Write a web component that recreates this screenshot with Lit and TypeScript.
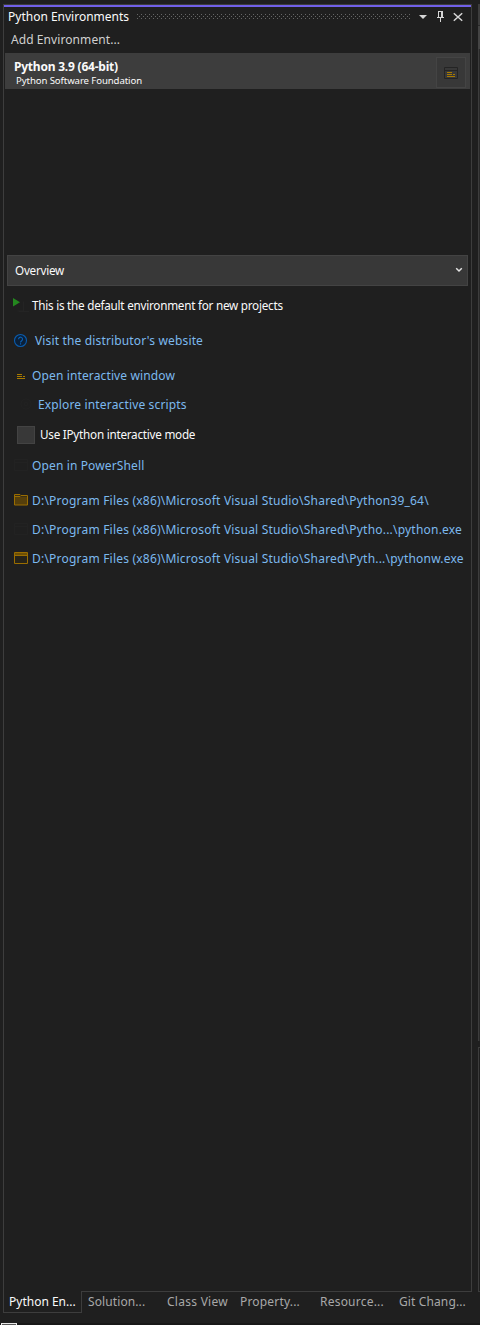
import { LitElement, html, css, svg, nothing } from "lit";
import { customElement } from "lit/decorators.js";

const playIcon = svg`<path d="M0 7v8.500l7-4.250z" fill="#24881f"/><path d="M10.500 10.500v9.500h-6M6 20.500h10" stroke="#242424" fill="none"/>`;
const helpIcon = svg`<circle cx="7.500" cy="14.500" r="6" fill="#0b2038" stroke="#0a5cae" stroke-width="1.100"/><path d="M5.600 13.200a1.950 1.950 0 1 1 3.100 1.500c-.8.55-1.150.85-1.150 1.800" fill="none" stroke="#0a62b8" stroke-width="1.100"/><path d="M7 17.300h1.100v1.100H7z" fill="#0a62b8"/>`;
const linesIcon = svg`<path shape-rendering="crispEdges" d="M0 0h5v1H0zM0 2h5v1H0zM6 2h2v1H6zM0 4h3v1H0zM3 4h5v1H3z" fill="#a87a00"/>`;
const folderIcon = svg`<path d="M1.500 9.500h5l1 1h7v8.500h-13z" fill="#553f0c"/><path d="M1.500 8.500h5.500l1 1h6.500v9.500h-13zM1.500 10.500h5.500l1-1" fill="none" stroke="#9a6d00"/>`;
const windowIcon = svg`<path d="M1.500 8.500h13v11h-13z" fill="#262319" stroke="#9a6d00"/><path d="M2 9h12v2H2z" fill="#6d4f05"/><path d="M2 11h12v1H2z" fill="#9a6d00"/>`;
const ghostWindow = svg`<path d="M1.500 8.500h13v11h-13zM2 11.500h12" fill="none" stroke="#222"/>`;
const ghostGear = svg`<circle cx="13" cy="14" r="5" fill="none" stroke="#222"/><circle cx="13" cy="14" r="2" fill="none" stroke="#222"/>`;

const icon = (content: unknown) =>
  html`<svg class="icon" width="20" height="29" viewBox="0 0 20 29">${content}</svg>`;

@customElement("app-root")
export class AppRoot extends LitElement {
  static styles = css`
    :host {
      display: block;
      height: 1325px;
      position: relative;
      overflow: hidden;
      background: #1f1f1f;
      color: #fafafa;
      font: 12px/16px "Noto Sans", sans-serif;
      white-space: nowrap;
    }
    * { box-sizing: border-box; }
    svg { display: block; flex: none; }
    .page { display: flex; height: 1325px; padding: 4px 0 0 3px; }
    .tool { width: 469px; display: flex; flex-direction: column; height: 1321px; }
    .panel {
      height: 1287px;
      border: 1px solid #3d3d3d;
      border-bottom: 0;
      display: flex;
      flex-direction: column;
      flex: none;
    }
    .accent { height: 2px; background: #7160e8; flex: none; }
    .title { height: 20px; display: flex; align-items: center; padding-left: 4px; flex: none; }
    .title .name { width: 129px; }
    .add { height: 26px; line-height: 26px; padding-left: 7px; color: #d0d0d0; letter-spacing: 0.08px; flex: none; }
    .env {
      height: 36px;
      margin: 0 1px;
      background: #3d3d3d;
      display: flex;
      justify-content: space-between;
      padding: 4px 4px 0 9px;
      flex: none;
    }
    .env-name { font-weight: 700; letter-spacing: -0.22px; line-height: 17px; padding-top: 1px; }
    .env-vendor { font-size: 9.6px; line-height: 12px; letter-spacing: -0.09px; padding-left: 2px; }
    .env-button { width: 30px; height: 31px; border: 1px solid #444; background: #383838; }
    .combo {
      margin: 166px 3px 0;
      height: 31px;
      background: #383838;
      border: 1px solid #434343;
      display: flex;
      align-items: center;
      justify-content: space-between;
      padding: 0 4px 2px 7px;
      flex: none;
    }
    .plain { font-size: 11.7px; letter-spacing: -0.24px; }
    .list { padding: 5px 0 0 9px; }
    .group { margin-bottom: 6px; }
    .row { height: 29px; display: flex; align-items: center; }
    .row .text { margin-left: -1px; }
    .row .plain { padding-bottom: 2px; }
    .link { color: #7cb9ee; letter-spacing: 0.13px; }
    .visit .text { margin-left: 2px; letter-spacing: 0.15px; }
    .explore .text { margin-left: 5px; letter-spacing: 0.15px; }
    .path .text { letter-spacing: 0.21px; }
    .check { margin: 1px 0 2px; padding-left: 4px; }
    .check .text { margin-left: 5px; }
    .box { width: 18px; height: 18px; background: #383838; border: 1px solid #434343; margin-top: 1px; }
    .tabs { display: flex; height: 22px; flex: none; color: #a8a8a8; letter-spacing: 0.1px; }
    .tab { border-top: 1px solid #3d3d3d; padding: 1px 0 0 6px; width: 79px; line-height: 17px; }
    .tab.active {
      border: 1px solid #3d3d3d;
      border-top: 0;
      padding: 2px 0 0 5px;
      color: #fafafa;
      letter-spacing: 0;
    }
    .tab.class-view { width: 73px; letter-spacing: 0.27px; }
    .tab.property { width: 80px; letter-spacing: 0.18px; }
    .tab.resource { letter-spacing: 0.22px; }
    .tab.git { flex: 1; letter-spacing: 0.12px; }
    .neighbor { margin-left: 6px; width: 2px; display: flex; flex-direction: column; }
    .n-head { height: 22px; background: #3d3d3d; border-bottom: 1px solid #2a2a2a; flex: none; }
    .n-row { height: 23px; background: #444; flex: none; }
    .n-body { height: 992px; border-left: 1px solid #3d3d3d; background: #2a2a2a; flex: none; }
    .n-next { height: 245px; margin-top: 6px; border: 1px solid #3d3d3d; border-right: 0; flex: none; }
    .status { position: absolute; left: 0; right: 0; bottom: 0; height: 2px; padding-left: 1px; background: #181818; }
    .status-icon { width: 16px; height: 2px; border: 1px solid #e8e8e8; border-bottom: 0; background: #555; }
  `;

  private row(kind: string, glyph: unknown, text: string, link = true) {
    return html`<div class="row ${kind}">
      ${glyph === nothing ? nothing : icon(glyph)}<span class="text ${link ? "link" : "plain"}">${text}</span>
    </div>`;
  }

  render() {
    return html`
      <div class="page">
        <div class="tool">
          <div class="panel">
            <div class="accent"></div>
            <div class="title">
              <span class="name">Python Environments</span>
              <svg width="275" height="20" viewBox="137 7 275 20" shape-rendering="crispEdges">
                <defs>
                  <pattern id="grip" x="137" y="14" width="4" height="4" patternUnits="userSpaceOnUse">
                    <path d="M0 0h1v1H0zM2 2h1v1H2z" fill="#666" />
                  </pattern>
                </defs>
                <path d="M137 14h274v5H137z" fill="url(#grip)" />
              </svg>
              <svg width="56" height="20" viewBox="412 7 56 20">
                <path d="M419 15h8l-4 4z" fill="#d6d6d6" />
                <path d="M438 11h5v6h1v1h-3v4h-1v-4h-3v-1h1zM439 12v5h2v-5z" fill="#d6d6d6" fill-rule="evenodd" />
                <path d="M453.800 13.200l8.400 7.600M462.200 13.200l-8.400 7.600" stroke="#d6d6d6" stroke-width="1.500" />
              </svg>
            </div>
            <div class="add">Add Environment...</div>
            <div class="env">
              <div>
                <div class="env-name">Python 3.9 (64-bit)</div>
                <div class="env-vendor">Python Software Foundation</div>
              </div>
              <div class="env-button">
                <svg width="28" height="29" viewBox="437 58 28 29">
                  <path d="M444.500 67.500h13v11h-13zM445 70.500h12" fill="none" stroke="#242424" />
                  <g transform="translate(447 72)">${linesIcon}</g>
                </svg>
              </div>
            </div>
            <div class="combo">
              <span class="plain">Overview</span>
              <svg width="8" height="8" viewBox="0 0 8 8">
                <path d="M1.200 2.300l2.800 2.700 2.800-2.700" fill="none" stroke="#e4e4e4" stroke-width="1.500" />
              </svg>
            </div>
            <div class="list">
              <div class="group">${this.row("first", playIcon, "This is the default environment for new projects", false)}</div>
              <div class="group">${this.row("visit", helpIcon, "Visit the distributor's website")}</div>
              <div class="group">
                ${this.row("", svg`<g transform="translate(4 13)">${linesIcon}</g>`, "Open interactive window")}
                ${this.row("explore", ghostGear, "Explore interactive scripts")}
                <div class="row check"><span class="box"></span><span class="text plain">Use IPython interactive mode</span></div>
                ${this.row("", ghostWindow, "Open in PowerShell")}
              </div>
              <div class="group">
                ${this.row("path", folderIcon, "D:\\Program Files (x86)\\Microsoft Visual Studio\\Shared\\Python39_64\\")}
                ${this.row("path", ghostWindow, "D:\\Program Files (x86)\\Microsoft Visual Studio\\Shared\\Pytho...\\python.exe")}
                ${this.row("path", windowIcon, "D:\\Program Files (x86)\\Microsoft Visual Studio\\Shared\\Pyth...\\pythonw.exe")}
              </div>
            </div>
          </div>
          <div class="tabs">
            <div class="tab active">Python En...</div>
            <div class="tab">Solution...</div>
            <div class="tab class-view">Class View</div>
            <div class="tab property">Property...</div>
            <div class="tab resource">Resource...</div>
            <div class="tab git">Git Chang...</div>
          </div>
        </div>
        <div class="neighbor">
          <div class="n-head"></div>
          <div class="n-row"></div>
          <div class="n-body"></div>
          <div class="n-next"></div>
        </div>
      </div>
      <div class="status"><div class="status-icon"></div></div>
    `;
  }
}
